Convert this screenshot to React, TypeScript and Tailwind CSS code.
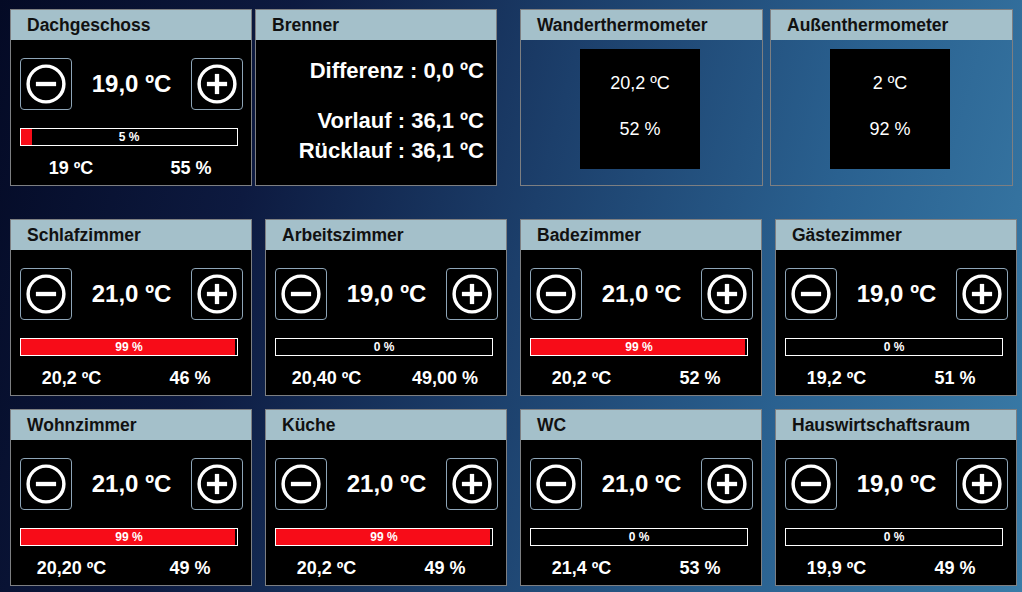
type Room = {
  name: string;
  set: string;
  valve: number;
  temp: string;
  hum: string;
};

const row2: Room[] = [
  { name: 'Schlafzimmer', set: '21,0 ºC', valve: 99, temp: '20,2 ºC', hum: '46 %' },
  { name: 'Arbeitszimmer', set: '19,0 ºC', valve: 0, temp: '20,40 ºC', hum: '49,00 %' },
  { name: 'Badezimmer', set: '21,0 ºC', valve: 99, temp: '20,2 ºC', hum: '52 %' },
  { name: 'Gästezimmer', set: '19,0 ºC', valve: 0, temp: '19,2 ºC', hum: '51 %' },
];

const row3: Room[] = [
  { name: 'Wohnzimmer', set: '21,0 ºC', valve: 99, temp: '20,20 ºC', hum: '49 %' },
  { name: 'Küche', set: '21,0 ºC', valve: 99, temp: '20,2 ºC', hum: '49 %' },
  { name: 'WC', set: '21,0 ºC', valve: 0, temp: '21,4 ºC', hum: '53 %' },
  { name: 'Hauswirtschaftsraum', set: '19,0 ºC', valve: 0, temp: '19,9 ºC', hum: '49 %' },
];

const font = { fontFamily: '"Liberation Sans", Arial, sans-serif' };

function Header({ title }: { title: string }) {
  return (
    <div className="h-[30px] bg-[#a4c0ca] pl-4 flex items-center text-[17.5px] font-bold text-[#111]">
      {title}
    </div>
  );
}

function RoundButton({ plus }: { plus?: boolean }) {
  return (
    <button className="w-[52px] h-[52px] rounded-[4px] border border-[#8ea5b7] bg-black flex items-center justify-center">
      <svg width="52" height="52" viewBox="0 0 52 52">
        <circle cx="26" cy="26" r="18.6" fill="none" stroke="white" strokeWidth="3.6" />
        <line x1="15.5" y1="26" x2="36.5" y2="26" stroke="white" strokeWidth="4.5" />
        {plus && <line x1="26" y1="15.5" x2="26" y2="36.5" stroke="white" strokeWidth="4.5" />}
      </svg>
    </button>
  );
}

function RoomCard({ room }: { room: Room }) {
  return (
    <div className="w-[242px] h-[177px] border border-[#7d7f82] bg-black flex flex-col shrink-0">
      <Header title={room.name} />
      <div className="flex items-center justify-between pl-[9px] pr-[8px] mt-[18px]">
        <RoundButton />
        <span className="text-[24px] font-bold text-white">{room.set}</span>
        <RoundButton plus />
      </div>
      <div className="relative ml-[9px] mt-[18px] w-[218px] h-[18px] border border-white">
        <div className="absolute left-0 top-0 bottom-0 bg-[#f70c18]" style={{ width: `${room.valve}%` }} />
        <div className="absolute inset-0 flex items-center justify-center text-[12px] font-bold text-white leading-none">
          {room.valve} %
        </div>
      </div>
      <div className="grid grid-cols-2 mt-[13px] text-[18px] font-bold text-white leading-none">
        <span className="text-center pl-[1px]">{room.temp}</span>
        <span className="text-center pr-[2px]">{room.hum}</span>
      </div>
    </div>
  );
}

function Thermo({ title, temp, hum }: { title: string; temp: string; hum: string }) {
  return (
    <div className="w-[243px] h-[177px] border border-[#7d7f82] flex flex-col shrink-0">
      <Header title={title} />
      <div className="ml-[59px] mt-[9px] w-[120px] h-[120px] bg-black flex flex-col items-center text-[18px] text-white leading-none">
        <span className="mt-[25px]">{temp}</span>
        <span className="mt-[28px]">{hum}</span>
      </div>
    </div>
  );
}

export default function App() {
  return (
    <div
      className="w-[1022px] h-[592px] overflow-hidden bg-[linear-gradient(105deg,#040a25_0%,#0d1a40_25%,#1c3f6b_50%,#2a6190_75%,#3a7ca8_100%)] pt-[9px] pl-[10px]"
      style={font}
    >
      <div className="flex">
        <div className="w-[242px] h-[177px] border border-[#7d7f82] bg-black flex flex-col shrink-0">
          <Header title="Dachgeschoss" />
          <div className="flex items-center justify-between pl-[9px] pr-[8px] mt-[18px]">
            <RoundButton />
            <span className="text-[24px] font-bold text-white">19,0 ºC</span>
            <RoundButton plus />
          </div>
          <div className="relative ml-[9px] mt-[18px] w-[218px] h-[18px] border border-white">
            <div className="absolute left-0 top-0 bottom-0 bg-[#f70c18] w-[5%]" />
            <div className="absolute inset-0 flex items-center justify-center text-[12px] font-bold text-white leading-none">
              5 %
            </div>
          </div>
          <div className="grid grid-cols-2 mt-[13px] text-[18px] font-bold text-white leading-none">
            <span className="text-center">19 ºC</span>
            <span className="text-center">55 %</span>
          </div>
        </div>

        <div className="ml-[3px] w-[242px] h-[177px] border border-[#7d7f82] bg-black flex flex-col shrink-0">
          <Header title="Brenner" />
          <div className="flex flex-col items-end pr-[12px] text-[22px] font-bold text-white leading-none">
            <span className="mt-[20px]">Differenz : 0,0 ºC</span>
            <span className="mt-[28px]">Vorlauf : 36,1 ºC</span>
            <span className="mt-[8px]">Rücklauf : 36,1 ºC</span>
          </div>
        </div>

        <div className="ml-[23px] flex gap-[7px]">
          <Thermo title="Wanderthermometer" temp="20,2 ºC" hum="52 %" />
          <Thermo title="Außenthermometer" temp="2 ºC" hum="92 %" />
        </div>
      </div>

      <div className="flex gap-[13px] mt-[33px]">
        {row2.map((r) => (
          <RoomCard key={r.name} room={r} />
        ))}
      </div>

      <div className="flex gap-[13px] mt-[13px]">
        {row3.map((r) => (
          <RoomCard key={r.name} room={r} />
        ))}
      </div>
    </div>
  );
}
